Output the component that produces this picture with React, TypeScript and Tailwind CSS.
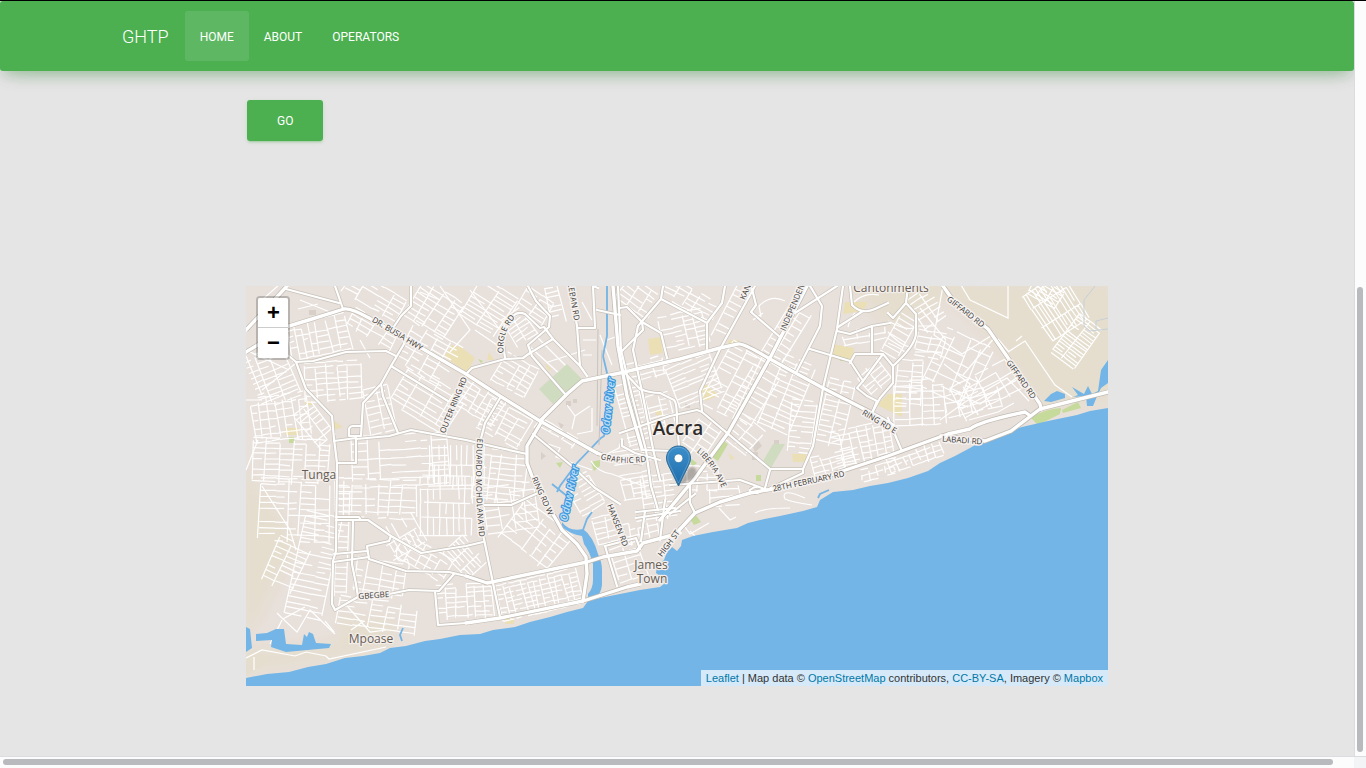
import React from "react";

type Patch = [cx: number, cy: number, w: number, h: number, angle: number, gap: number, cross: number];

function seeded(seed: number) {
  let s = seed;
  return () => {
    s = (s * 16807) % 2147483647;
    return s / 2147483647;
  };
}

/** Builds a block of irregular side streets inside a rotated rectangle. */
function streets([cx, cy, pw, ph, angle, gap, cross]: Patch, seed: number) {
  const w = pw * 1.22;
  const h = ph * 1.22;
  const rnd = seeded(seed * 7919 + 13);
  const a = (angle * Math.PI) / 180;
  const pt = (x: number, y: number) =>
    `${(cx + x * Math.cos(a) - y * Math.sin(a)).toFixed(1)} ${(cy + x * Math.sin(a) + y * Math.cos(a)).toFixed(1)}`;
  let d = "";
  const cols: number[] = [];
  for (let x = -w / 2; x <= w / 2 + 1; x += cross * (0.75 + rnd() * 0.5)) cols.push(x);
  for (let y = -h / 2; y <= h / 2; y += gap * (0.75 + rnd() * 0.3)) {
    for (let i = 0; i < cols.length - 1; i++) {
      if (rnd() < 0.86) d += `M${pt(cols[i], y)}L${pt(cols[i + 1] - (rnd() < 0.25 ? cross * 0.3 : 0), y + (rnd() - 0.5) * 1.5)}`;
    }
  }
  cols.forEach((x) => {
    const top = -h / 2 + rnd() * gap;
    const bottom = h / 2 - rnd() * gap;
    if (rnd() < 0.9) d += `M${pt(x, top)}L${pt(x + (rnd() - 0.5) * 4, bottom)}`;
  });
  return d;
}

const patches: Patch[] = [
  [276, 376, 40, 46, -22, 6, 15],
  [320, 338, 50, 32, -12, 7, 9],
  [376, 333, 50, 20, 30, 7, 13],
  [336, 382, 50, 34, -4, 6, 12],
  [378, 299, 56, 22, 30, 5, 16],
  [433, 310, 38, 36, 32, 6, 12],
  [427, 355, 44, 40, 30, 6, 15],
  [432, 403, 62, 36, 31, 6, 15],
  [283, 419, 50, 40, -8, 8, 8],
  [318, 424, 24, 36, -38, 6, 12],
  [294, 462, 68, 38, 2, 6, 12],
  [382, 411, 24, 40, -12, 7, 12],
  [401, 460, 80, 42, -3, 8, 14],
  [455, 466, 34, 48, 90, 6, 17],
  [300, 511, 66, 52, 2, 7, 13],
  [316, 566, 34, 86, 12, 6, 18],
  [289, 567, 34, 42, 24, 6, 18],
  [345, 542, 16, 90, 2, 7, 16],
  [378, 499, 72, 32, 2, 7, 11],
  [445, 508, 52, 44, 90, 7, 14],
  [402, 537, 28, 32, 61, 6, 18],
  [380, 579, 42, 30, 10, 7, 12],
  [382, 617, 72, 26, 8, 6, 16],
  [424, 559, 46, 22, 30, 7, 12],
  [466, 602, 48, 30, -3, 5, 9],
  [465, 559, 32, 24, 47, 5, 12],
  [542, 594, 72, 30, -13, 5, 7],
  [515, 507, 50, 38, -8, 9, 12],
  [537, 539, 54, 40, 38, 9, 12],
  [502, 477, 44, 44, 6, 7, 12],
  [491, 309, 40, 38, 32, 5, 18],
  [533, 308, 26, 26, 33, 5, 14],
  [523, 326, 24, 28, -34, 5, 14],
  [517, 377, 34, 28, 30, 6, 9],
  [479, 402, 38, 28, 31, 6, 10],
  [504, 424, 38, 28, 28, 6, 12],
  [560, 302, 20, 34, -12, 5, 14],
  [560, 437, 42, 12, 30, 8, 16],
  [587, 493, 26, 32, -30, 6, 12],
  [640, 300, 34, 24, 35, 6, 12],
  [683, 332, 36, 32, -13, 5, 13],
  [650, 370, 36, 18, -14, 5, 11],
  [636, 414, 24, 52, -14, 5, 11],
  [664, 414, 24, 34, -14, 6, 12],
  [694, 379, 38, 38, -22, 5, 14],
  [690, 300, 48, 18, 28, 6, 12],
  [735, 315, 18, 50, 26, 7, 12],
  [733, 381, 30, 60, 27, 7, 14],
  [756, 400, 32, 50, 30, 7, 17],
  [792, 340, 32, 56, 30, 8, 15],
  [790, 397, 34, 62, 23, 6, 17],
  [804, 427, 24, 44, 6, 6, 14],
  [840, 415, 30, 56, 13, 6, 16],
  [864, 445, 50, 32, -12, 6, 9],
  [833, 464, 34, 20, -15, 7, 10],
  [748, 438, 28, 26, 39, 7, 12],
  [705, 440, 28, 34, 35, 8, 12],
  [868, 335, 42, 12, -10, 8, 14],
  [876, 376, 26, 24, -40, 6, 12],
  [899, 337, 16, 36, 30, 7, 16],
  [930, 309, 26, 32, -32, 6, 13],
  [932, 345, 26, 22, 10, 7, 12],
  [925, 404, 50, 40, -2, 7, 13],
  [909, 383, 20, 38, 4, 6, 12],
  [957, 368, 42, 54, 24, 10, 14],
  [990, 389, 58, 32, -28, 9, 16],
  [975, 402, 48, 20, -13, 8, 15],
  [1056, 308, 46, 38, 57, 4, 19],
  [1080, 344, 30, 40, 36, 4, 15],
  [1045, 293, 26, 16, 30, 4, 12],
  [915, 457, 46, 16, -19, 6, 8],
  [881, 471, 32, 11, -16, 6, 8],
  [640, 487, 30, 24, -10, 6, 10],
  [660, 498, 28, 38, -8, 6, 11],
  [642, 533, 34, 20, -12, 7, 9],
  [629, 563, 24, 30, -18, 7, 12],
  [608, 530, 22, 24, -14, 6, 12],
  [705, 480, 30, 22, 2, 7, 10],
  [726, 495, 26, 22, -5, 9, 12],
  [640, 456, 44, 12, -8, 5, 12],
];

const minorRoads = [
  "M246 356L262 395M280 284L262 300M262 390L300 360M246 350L289 370",
  "M567 405L575 416L572 429M575 416L590 406M592 408V431L577 434M548 444L560 448L556 457L592 470",
  "M761 317L759 306Q771 294 785 301M753 320L763 313M746 350L770 365",
  "M246 658L262 650L295 656L306 652L326 656L329 659L386 647M254 670V657M282 620L270 644M305 607L283 619L297 632L310 610L335 634M351 630L364 621",
  "M277 613L283 619M325 621L334 632M348 607L370 632L386 630",
  "M943 286L934 335L962 354L994 334M961 285L970 300L1008 318V286M940 420L965 402L1007 378L1029 401M941 386L980 404L1022 374",
  "M1008 352L1025 341L1055 385L1072 397M998 339L1009 352M1016 341L1022 336",
  "M963 375L995 337M944 364L970 384L958 408M969 420L998 412L1014 403M920 308L946 340M918 326H935M915 352L941 352",
  "M888 321Q908 332 916 327M888 332Q902 347 912 347M888 343Q900 348 905 352",
  "M854 302Q864 292 879 295M848 327Q850 318 855 313",
  "M805 498Q780 487 785 499Q791 502 812 505M755 513Q763 508 790 508",
  "M685 527L690 534L709 523M690 531L695 536M719 508L730 520L736 517",
  "M591 461Q597 472 612 474L646 487M607 454L619 448L622 438",
  "M397 547Q394 566 407 559Q413 571 402 572",
  "M528 345L562 376M538 338L572 372M548 362L585 350M582 302L592 320M583 340H596M583 355H592",
  "M470 290L500 330M440 286L470 330L450 352M475 330L497 345M246 400H262M258 440L246 470M262 486L290 530L296 550",
  "M360 340L370 358M300 300L330 312M298 309L318 304M420 292L440 300M600 335L612 365M607 340L618 336",
];

const mainRoads = [
  "M335 286L343 309M286 289L339 303",
  "M289 356L296 362L313 361L346 352L386 351L396 356",
  "M411 286V306L401 316L393 328",
  "M404 344L391 366L381 384L363 403L361 436H349V429Q350 426 353 426H361",
  "M381 384L383 396L398 433M391 366L448 401",
  "M296 362L306 389L332 416L334 439L337 463L336 551L333 561L332 604L335 610L358 597L356 584L352 564L353 521",
  "M334 441L356 438V463H337M356 439L389 436L411 430L466 440L500 448L527 454",
  "M336 517H359L361 520H336M359 520H368L391 536L421 553L466 546L483 542",
  "M334 554L367 551M333 562L369 557M391 536L389 541L367 546L369 559L406 571L449 572L466 576",
  "M358 597L389 594L409 590L439 591L454 574M435 591L438 625L466 623",
  "M500 398L485 423L477 454V484L480 521L485 544L500 617",
  "M467 373L472 368L505 359L523 358L530 353L553 339",
  "M505 358L502 336L513 316Q518 311 525 314L540 328L544 327L553 339L580 366L587 376",
  "M528 286L536 301L550 316L549 327L528 345L532 356L565 394",
  "M570 286L577 326L580 366M577 328H595L593 286L598 288",
  "M597 310L620 315M618 286L621 350L632 396L646 450L651 486L658 510",
  "M620 308L627 307L642 322L643 330L620 353M663 286L661 299L638 326L633 350L643 396L653 449L660 480M661 299L707 323V349",
  "M725 286L722 303L707 323M642 322L661 333L667 358",
  "M625 373L640 389Q650 393 660 393L674 400Q677 403 677 420L679 447",
  "M620 433L670 416L697 410L702 412L770 469L803 469",
  "M642 450L675 451M622 440L622 446L635 453L660 460",
  "M755 286L720 349L700 391L702 411",
  "M752 289L756 305L751 312L780 337",
  "M810 286L822 306L820 326L797 371M837 286L795 313M810 349L850 361L863 381L857 388L867 396L877 401L873 411",
  "M843 286L837 329L823 388L813 446L803 469L803 473L767 490",
  "M850 286L852 305Q862 315 875 309L888 303M863 311L838 327M837 331L850 334L872 326L890 323M872 326V354",
  "M850 363L855 354H883L863 381M883 354L893 366",
  "M908 286L906 303L916 314V333Q916 345 893 366L893 383L880 398L873 411M906 303L893 318L888 313",
  "M888 418L901 449",
  "M670 485L740 480L754 485L767 490M770 470L765 488M750 490Q757 484 763 489Q758 495 750 492",
  "M690 483V503L695 513M695 494L670 514",
  "M533 434L572 466L595 488L620 504",
  "M484 505H511L538 493",
  "M605 546L617 586M605 546L636 538L640 549M660 540L665 500",
  "M636 512L675 508M636 518L680 511M645 511L641 541",
];

const highways = [
  "M287 286L246 330",
  "M246 352L256 346L289 326L312 319L344 309Q351 308 369 318L423 349L466 374L500 396L540 421L597 453",
  "M597 453L615 460L642 463",
  "M540 421L567 394L582 381L620 373L680 359L720 348L738 344Q743 343 770 359L823 388L870 412L893 425",
  "M542 421L527 446V463L535 484L557 521L562 530L577 544L586 557L587 574L583 601",
  "M466 576L487 583L587 562L603 557L637 551L643 543L680 533",
  "M466 623L500 618L583 601L627 587L640 584",
  "M613 286L618 346L627 396L642 449",
  "M807 286L770 358L728 433L695 478L660 520",
  "M660 553L670 540L695 513L720 502L750 493L767 490L803 484L888 456L948 434L970 429Q980 421 1025 412L1029 415",
  "M941 436L985 441L1011 431L1040 409L1108 392",
  "M943 286L955 303L988 329L1040 404L1041 409",
];

const coast =
  "M1108 408L1090 411L1077 415L1048 421L1022 427L1005 433L998 435L985 439L970 448L955 456L940 463L928 471L908 478L888 483L870 486L853 490L833 492L820 500L817 507L803 511L780 516L760 520L748 523L737 528L713 532L693 536L682 540L681 546L677 551L672 547L667 552L664 560L657 566L656 573L660 576L665 583L660 587L640 590L620 594L600 598L588 601L583 608L567 612L550 617L530 622L515 627L493 630L480 634L460 635L440 639L425 641L406 646L390 648L380 653L363 656L345 658L326 664L308 667L289 672L267 674L246 678V686H1108Z";

const rivers = [
  "M607 286V336L603 356L607 373L611 396L604 436L601 438L577 463L560 486L557 492",
  "M552 484L567 496M583 530L587 519L592 512M605 434L608 410",
  "M818 498L820 494L829 490M402 641L400 635L403 628",
];

type Label = { text: string; x: number; y: number; angle: number };
const roadLabels: Label[] = [
  { text: "DR. BUSIA HWY", x: 396, y: 336, angle: 31 },
  { text: "OUTER RING RD", x: 456, y: 406, angle: -68 },
  { text: "GBEGBE", x: 374, y: 598, angle: -4 },
  { text: "RING RD W", x: 540, y: 497, angle: 66 },
  { text: "HANSEN RD", x: 615, y: 526, angle: 69 },
  { text: "HIGH ST", x: 671, y: 545, angle: -53 },
  { text: "RING RD E", x: 878, y: 424, angle: 31 },
  { text: "LABADI RD", x: 962, y: 443, angle: 4 },
  { text: "28TH FEBRUARY RD", x: 809, y: 484, angle: -12 },
  { text: "GIFFARD RD", x: 964, y: 314, angle: 38 },
  { text: "GIFFARD RD", x: 1019, y: 381, angle: 55 },
  { text: "INDEPENDENCE", x: 797, y: 304, angle: -67 },
  { text: "KANDA", x: 750, y: 288, angle: -67 },
];

const curvedLabels = [
  { id: "orgle", text: "ORGLE RD", d: "M504 356Q500 334 517 315" },
  { id: "graphic", text: "GRAPHIC RD", d: "M597 458Q620 466 650 461" },
  { id: "liberia", text: "LIBERIA AVE", d: "M694 450Q711 462 723 491" },
  { id: "eduardo", text: "EDUARDO MOHDLANA RD", d: "M478 431Q473 480 480 545" },
  { id: "eban", text: "LEBAN RD", d: "M567 280L575 325" },
];

const yellow =
  "M452 345L461 347L475 358L467 372L444 357ZM648 339L661 337L663 353L650 355ZM832 344L854 348L852 361L830 358ZM703 383L719 395L706 401L699 397ZM792 454H806L807 462H793ZM888 394H902V417L877 405ZM845 302H868L863 311L843 314ZM285 428H299V435H285ZM334 421L343 427L334 430ZM489 352L494 360H487ZM545 363L552 369L548 371ZM506 618H514V624H505ZM655 410H662V415H656ZM729 340H739V344H728ZM305 401H312V405H305ZM728 453L735 458L731 460Z";
const green =
  "M723 441L728 444L718 461L712 457ZM1031 418Q1044 409 1061 408L1060 414L1038 425ZM1062 410L1078 402L1081 408L1063 413ZM695 514L701 522L694 525L690 519ZM591 462L600 460V466L594 471ZM289 437H294V443H289ZM656 513L671 510V512L656 515ZM556 463L563 462L560 468ZM478 359L483 361L481 363ZM756 475H761V481H756ZM840 358H848V361H840ZM690 458L697 463L692 467Z";

function MapTiles() {
  return (
    <svg
      className="block h-full w-full"
      viewBox="246 286 862 400"
      preserveAspectRatio="xMidYMid slice"
      role="img"
      aria-label="Street map of Accra"
      fontFamily="'Open Sans', 'Noto Sans', sans-serif"
    >
      <defs>
        <linearGradient id="pin" x1="0" y1="0" x2="0" y2="1">
          <stop offset="0" stopColor="#3d8fcc" />
          <stop offset="1" stopColor="#1d6cab" />
        </linearGradient>
        <filter id="haze" x="-20%" y="-20%" width="140%" height="140%">
          <feGaussianBlur stdDeviation="7" />
        </filter>
        <filter id="shade" x="-50%" y="-50%" width="200%" height="200%">
          <feGaussianBlur stdDeviation="1.3" />
        </filter>
        {curvedLabels.map((l) => (
          <path key={l.id} id={l.id} d={l.d} />
        ))}
      </defs>
      <path d="M246 286H1108V686H246Z" fill="#e8e0db" />
      <g fill="#e5decf" filter="url(#haze)">
        <path d="M1000 280H1120V405L1040 408L1000 352L950 300L890 330L850 290L880 270Z" />
        <path d="M240 460L262 490L292 530L297 550L275 590L260 620L240 640Z" />
        <path d="M335 615L400 620L390 650L240 675V650L340 640Z" />
      </g>
      <path d="M246 655L256 650L270 660L246 676Z" fill="#e5decf" />
      <path d={yellow} fill="#ebdfb6" />
      <path d={green} fill="#c6da9b" />
      <path
        fill="#d9cfc9"
        d="M566 401H571V406H566ZM573 399H577V403H573ZM541 452L546 456L541 460ZM774 440H779V444H774ZM752 452H758V460H752ZM685 404H690V408H685ZM309 310H316V315H309ZM752 445L758 440L762 446L755 452ZM558 422L564 425L561 429Z"
      />
      <g stroke="#fff" strokeWidth="1.200" fill="none">
        {patches.map((p, i) => (
          <path key={i} d={streets(p, i + 1)} />
        ))}
        {minorRoads.map((d, i) => (
          <path key={i} d={d} />
        ))}
      </g>
      <path d="M567 364L582 379L553 404L539 389ZM773 444H785L771 468L763 461Z" fill="#d0dcc0" />
      <path d={coast} fill="#73b5e6" />
      <path
        fill="#73b5e6"
        d="M562 522Q569 532 583 529Q593 536 598 554Q602 562 602 570V585Q601 593 597 596L588 603V594Q593 588 593 580V564Q590 552 584 544L582 536Q570 534 562 527ZM246 627L250 629L252 648L246 652ZM256 634L267 633L276 629L284 629L286 644L302 645L304 634L307 637L309 632L313 634L316 643L331 644L329 648L286 652L271 647L272 640L256 641ZM1044 401L1051 394L1057 391L1065 394V398L1051 402ZM1072 387L1084 394L1088 386L1092 394L1098 391L1101 370L1108 360V383L1101 388L1098 394L1093 406H1087L1086 396L1073 397L1078 395Z"
      />
      <g stroke="#73b5e6" fill="none" strokeWidth="1.800">
        {rivers.map((d) => (
          <path key={d} d={d} />
        ))}
      </g>
      <path d="M1095 286L1084 300V326L1090 331L1108 329M1108 318L1096 321V329" stroke="#c5d0d6" fill="none" />
      <path d="M598 329L597 426M599 445L602 350" stroke="#c8c3be" strokeWidth="1" fill="none" />
      <g fill="none" strokeLinejoin="round">
        <g stroke="#c8c2ba" strokeWidth="3.600">
          {mainRoads.map((d) => (
            <path key={d} d={d} />
          ))}
        </g>
        <g stroke="#bfb9b0" strokeWidth="4.800">
          {highways.map((d) => (
            <path key={d} d={d} />
          ))}
        </g>
        <g stroke="#fff" strokeWidth="2.200" strokeLinecap="round">
          {mainRoads.map((d) => (
            <path key={d} d={d} />
          ))}
        </g>
        <g stroke="#fff" strokeWidth="3.400" strokeLinecap="round">
          {highways.map((d) => (
            <path key={d} d={d} />
          ))}
        </g>
      </g>
      <g fill="#3c3a38" stroke="#f5f1ee" strokeWidth="3" paintOrder="stroke" strokeLinejoin="round" fontSize="8" fontWeight="500" textAnchor="middle">
        {roadLabels.map((l) => (
          <text key={l.text + l.x} transform={`translate(${l.x} ${l.y}) rotate(${l.angle})`}>
            {l.text}
          </text>
        ))}
        {curvedLabels.map((l) => (
          <text key={l.id}>
            <textPath href={`#${l.id}`} startOffset="50%">
              {l.text}
            </textPath>
          </text>
        ))}
      </g>
      <g fill="#b9ddf7" stroke="#3d97dc" strokeWidth="2.200" paintOrder="stroke" strokeLinejoin="round" fontSize="11" fontWeight="600" fontStyle="italic" textAnchor="middle">
        <text transform="translate(612 406) rotate(-84)">Odaw River</text>
        <text transform="translate(573 494) rotate(-78)">Odaw River</text>
      </g>
      <g fill="#665c54" stroke="#f3eeea" strokeWidth="2.500" paintOrder="stroke" strokeLinejoin="round" fontSize="12" textAnchor="middle">
        <text x="319" y="479">Tunga</text>
        <text x="371" y="643">Mpoase</text>
        <text x="891" y="292">Cantonments</text>
        <text x="651" y="569">James</text>
        <text x="652" y="583">Town</text>
      </g>
      <text x="678" y="435" fill="#2e2b29" stroke="#f3eeea" strokeWidth="2" paintOrder="stroke" fontSize="19" fontWeight="600" textAnchor="middle">
        Accra
      </text>
      <path d="M679 485L686 472Q691 464 696 469Q698 474 691 480Z" fill="#000" fillOpacity="0.25" filter="url(#shade)" />
      <path
        d="M678.500 446C671.500 446 666.500 451.500 666.500 458C666.500 462 668 464.500 670 468.500L678.500 486L687 468.500C689 464.500 690.500 462 690.500 458C690.500 451.500 685.500 446 678.500 446Z"
        fill="url(#pin)"
        stroke="#2e6c97"
        strokeWidth="1"
      />
      <path d="M678.500 447.300C672.200 447.300 667.800 452.200 667.800 458C667.800 461.700 669.200 464 671.200 468L678.500 483L685.800 468C687.800 464 689.200 461.700 689.200 458C689.200 452.200 684.800 447.300 678.500 447.300Z" fill="none" stroke="#fff" strokeOpacity="0.2" />
      <circle cx="678.500" cy="458.300" r="4.300" fill="#fff" stroke="#2e6c97" strokeWidth="0.600" />
    </svg>
  );
}

function NavLink({ children, active }: { children: React.ReactNode; active?: boolean }) {
  return (
    <a
      href="#"
      aria-current={active ? "page" : undefined}
      className={
        active
          ? "rounded-[3px] bg-white/10 px-[15px] pt-4 pb-3.5 text-xs leading-5 text-white uppercase"
          : "rounded-[3px] px-[15px] pt-4 pb-3.5 text-xs leading-5 text-white uppercase"
      }
    >
      {children}
    </a>
  );
}

function ZoomButton({ label, children }: { label: string; children: React.ReactNode }) {
  return (
    <button
      type="button"
      aria-label={label}
      className="flex h-[30px] w-[30px] items-center justify-center border-b border-[#ccc] bg-white pl-px text-[22px] leading-[30px] font-bold text-black last:border-b-0"
    >
      {children}
    </button>
  );
}

export default function App() {
  return (
    <div className="flex h-screen flex-col overflow-hidden border-t border-black bg-[#fcfcfc] font-['Roboto',sans-serif]">
      <div className="flex min-h-0 flex-1">
        <div className="min-w-0 flex-1 overflow-hidden bg-[#e5e5e5]">
          <nav className="rounded-[3px] bg-[#4caf50] py-2.5 shadow-[0_10px_20px_-12px_rgba(76,175,80,0.42),0_3px_20px_0_rgba(0,0,0,0.12),0_8px_10px_-5px_rgba(76,175,80,0.2)]">
            <div className="mx-auto flex max-w-[1170px] items-center px-[15px]">
              <a href="#" className="pt-4 pr-4 pb-3.5 pl-[15px] text-lg leading-5 font-light text-white">
                GHTP
              </a>
              <NavLink active>Home</NavLink>
              <NavLink>About</NavLink>
              <NavLink>Operators</NavLink>
            </div>
          </nav>
          <main className="mx-auto max-w-[862px]">
            <button
              type="button"
              className="mt-[29px] ml-px block h-[41px] rounded-[3px] bg-[#4caf50] px-[30px] text-xs text-white uppercase shadow-[0_2px_2px_0_rgba(76,175,80,0.14),0_3px_1px_-2px_rgba(76,175,80,0.2),0_1px_5px_0_rgba(76,175,80,0.12)]"
            >
              Go
            </button>
            <section aria-label="Map" className="relative mt-[145px] h-[400px] overflow-hidden bg-[#ddd] font-['Liberation_Sans',sans-serif]">
              <MapTiles />
              <div className="absolute top-2.5 left-2.5 overflow-hidden rounded-[4px] border-2 border-black/20 bg-clip-padding">
                <ZoomButton label="Zoom in">+</ZoomButton>
                <ZoomButton label="Zoom out">−</ZoomButton>
              </div>
              <p className="absolute right-0 bottom-0 bg-white/70 px-[5px] text-[11px] leading-4 text-[#333]">
                <a href="#" className="text-[#0078a8]">Leaflet</a> | Map data ©{" "}
                <a href="#" className="text-[#0078a8]">OpenStreetMap</a> contributors,{" "}
                <a href="#" className="text-[#0078a8]">CC-BY-SA</a>, Imagery ©{" "}
                <a href="#" className="text-[#0078a8]">Mapbox</a>
              </p>
            </section>
          </main>
        </div>
        <div aria-hidden="true" className="flex w-3 flex-col border-l border-[#dcdce0] pr-0.5 pb-1">
          <div className="flex-[286]" />
          <div className="mx-auto w-1.5 flex-[466] rounded-full bg-[#b9babe]" />
        </div>
      </div>
      <div aria-hidden="true" className="flex h-3 border-t border-[#dcdce0]">
        <div className="flex-1 pt-0.5 pr-[21px] pl-[3px]">
          <div className="h-1.5 rounded-full bg-[#b9babe]" />
        </div>
        <div className="w-3 bg-[#f3f4f5]" />
      </div>
    </div>
  );
}
